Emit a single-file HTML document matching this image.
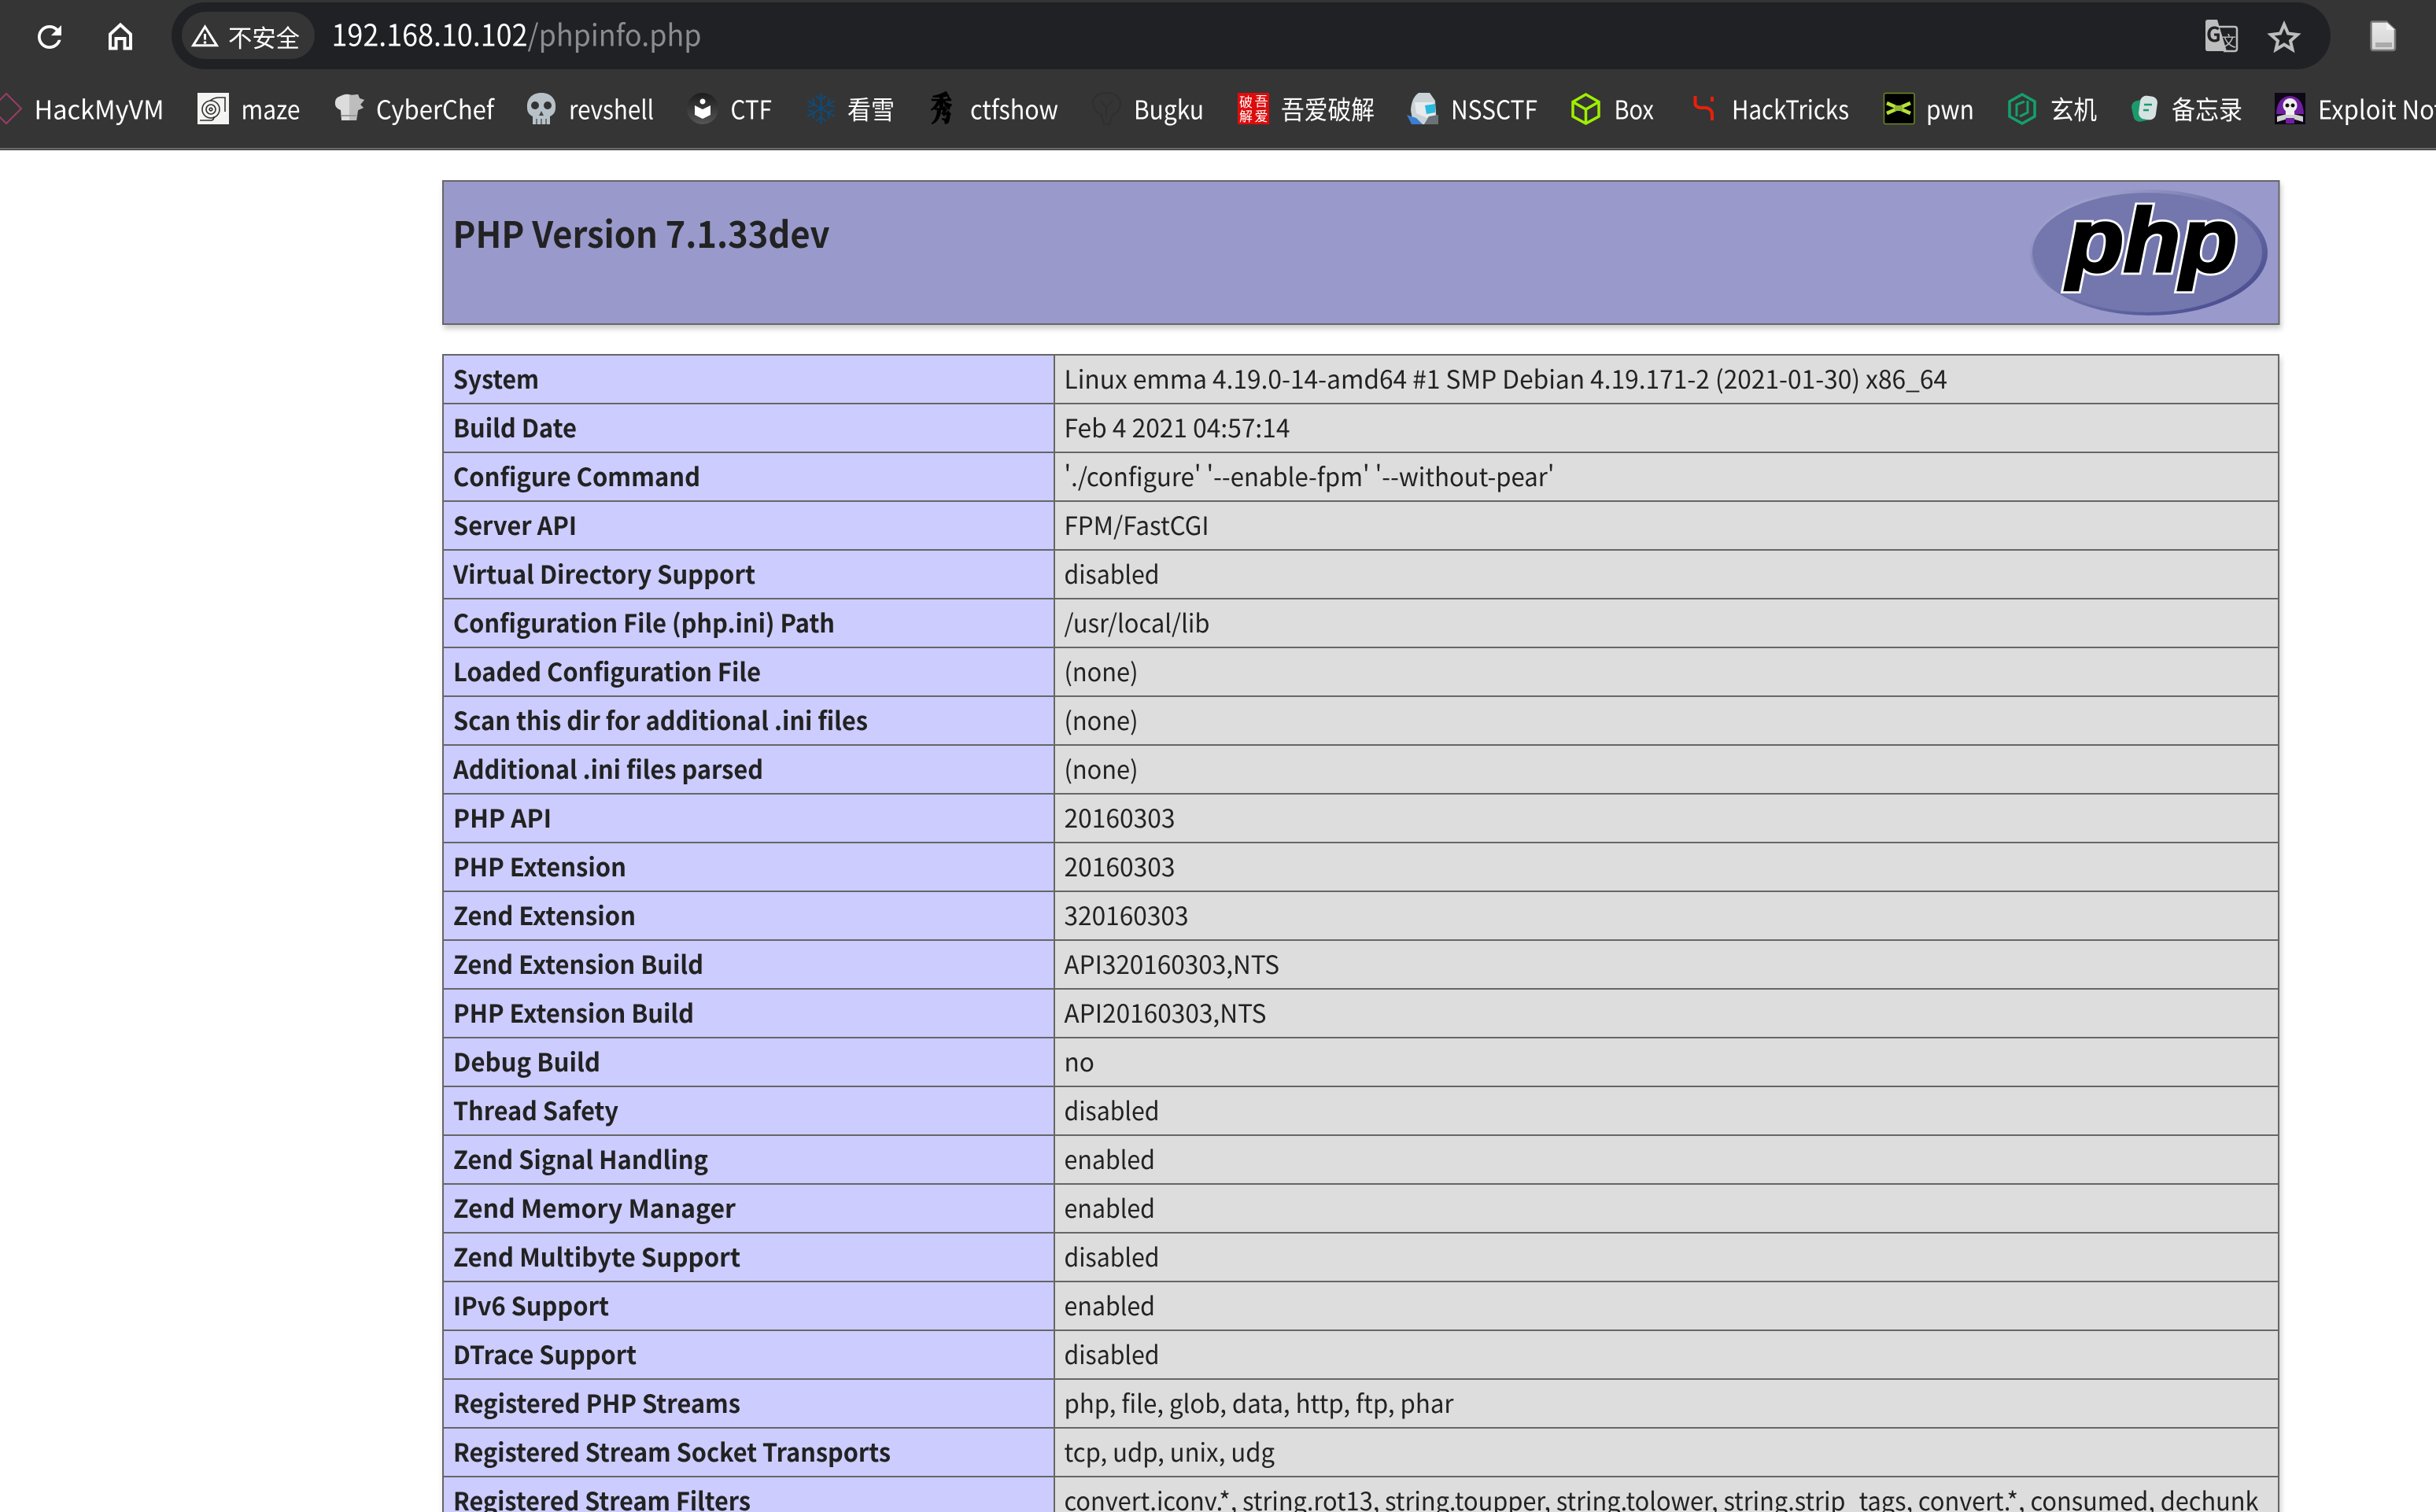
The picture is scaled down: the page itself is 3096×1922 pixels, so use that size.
<!DOCTYPE html>
<html lang="zh"><head><meta charset="utf-8"><title>phpinfo()</title>
<style>
html,body{margin:0;padding:0;width:3096px;height:1922px;overflow:hidden;background:#fff}
svg{display:block;position:absolute;left:0;top:0}
text{font-family:"Noto Sans CJK SC","Liberation Sans",sans-serif}
.b text{fill:#fff;font-size:33px}
.l text{fill:#222;font-size:32px;font-weight:700}
.v text{fill:#222;font-size:32px}
</style></head><body>
<svg width="3096" height="1922" viewBox="0 0 3096 1922" xmlns="http://www.w3.org/2000/svg">
<defs>
<linearGradient id="rim" x1="0" y1="0" x2="1" y2="1"><stop offset="0" stop-color="#b4b6d8"/><stop offset=".45" stop-color="#7377ad"/><stop offset="1" stop-color="#3f4389"/></linearGradient>
<linearGradient id="ctf" x1="0" y1="0" x2="0" y2="1"><stop offset="0" stop-color="#1c1c1c"/><stop offset="1" stop-color="#555"/></linearGradient>
<linearGradient id="doc" x1="0" y1="0" x2="0" y2="1"><stop offset="0" stop-color="#e8e8e8"/><stop offset="1" stop-color="#d4d4d4"/></linearGradient>
</defs>
<!-- browser chrome -->
<rect width="3096" height="188" fill="#353535"/>
<rect y="188" width="3096" height="2" fill="#6a6a6a"/>
<rect y="190" width="3096" height="1" fill="#333"/>
<rect x="218" y="3" width="2744" height="85" rx="42.5" fill="#202124"/>
<rect x="231" y="15" width="169" height="60" rx="30" fill="#353535"/>
<path transform="translate(40.5 24.5) scale(1.875)" fill="#fff" d="M17.65 6.35A7.958 7.958 0 0 0 12 4c-4.42 0-7.99 3.58-7.99 8s3.57 8 7.99 8c3.73 0 6.84-2.55 7.73-6h-2.08A5.99 5.99 0 0 1 12 18c-3.31 0-6-2.69-6-6s2.69-6 6-6c1.66 0 3.14.69 4.22 1.78L13 11h7V4l-2.35 2.35z"/>
<path d="M153 31.5L140 43.5V61.5H147.5V49H158.500V61.5H166V43.5Z" fill="none" stroke="#fff" stroke-width="4"/>
<path d="M260.500 34L245.500 57.800H275.500Z" fill="none" stroke="#fff" stroke-width="3"/>
<path d="M260.500 43V50.500" stroke="#fff" stroke-width="3"/><circle cx="260.500" cy="54" r="1.800" fill="#fff"/>
<text x="290" y="60" font-size="31" fill="#fff" textLength="91" lengthAdjust="spacingAndGlyphs">不安全</text>
<text x="421.500" y="58.500" font-size="38" fill="#fff" textLength="249" lengthAdjust="spacingAndGlyphs">192.168.10.102</text>
<text x="670.500" y="58.500" font-size="38" fill="#8a8c8f" textLength="221" lengthAdjust="spacingAndGlyphs">/phpinfo.php</text>
<!-- translate -->
<path d="M2806 25H2818L2830 65H2806Q2803 65 2803 62V28Q2803 25 2806 25Z" fill="#bdbdbd"/>
<path d="M2820 34H2840Q2843 34 2843 37V62Q2843 65 2840 65H2826" fill="none" stroke="#bdbdbd" stroke-width="2.500"/>
<text x="2804" y="53" font-size="26" font-weight="700" fill="#202124">G</text>
<text x="2823" y="59" font-size="19" fill="#bdbdbd">文</text>
<!-- star -->
<path d="M2903 31L2908 42.500L2920 44L2911 52L2913.500 63L2903 56.500L2892.500 63L2895 52L2886 44L2898 42.500Z" fill="none" stroke="#bdbdbd" stroke-width="4" stroke-linejoin="miter"/>
<!-- doc -->
<path d="M3015 27.500H3033L3044 38V61Q3044 64 3041 64H3016Q3013.500 64 3013.500 61V30Q3013.500 27.500 3015 27.500Z" fill="url(#doc)" stroke="#777" stroke-width="2.500"/>
<path d="M3033 28V38H3044" fill="#f2f2f2"/>
<rect x="3019" y="54" width="21" height="6" fill="#aaa"/>
<!-- bookmarks -->
<g class="b">
<path d="M8 119L27 138L8 157L-11 138Z" fill="none" stroke="#9a3d65" stroke-width="2"/>
<text x="43.500" y="151.500" textLength="165" lengthAdjust="spacingAndGlyphs">HackMyVM</text>
<rect x="251" y="118" width="40" height="40" fill="#f4f4f2"/>
<g fill="none" stroke="#333" stroke-width="1.600"><circle cx="268" cy="139" r="11"/><circle cx="268" cy="139" r="6"/><circle cx="268" cy="139" r="1.800"/><path d="M267 128Q272 124 278 124H286V142M254 153H268Q272 153 272 148V150"/></g>
<text x="306.500" y="151.500" textLength="75" lengthAdjust="spacingAndGlyphs">maze</text>
<path d="M433 122Q440 118 447 121L455 120L457 125L463 127L458 133L462 137L455 140L453 153H434L433 140Q425 137 426 130Q426 124 433 122Z" fill="#dcdcdc"/>
<path d="M444 121L455 120L457 125L463 127L458 133L462 137L455 140L453 153H444Z" fill="#bdbdbd"/>
<rect x="434" y="146" width="19" height="2" fill="#999"/>
<text x="478" y="151.500" textLength="150" lengthAdjust="spacingAndGlyphs">CyberChef</text>
<path d="M688 118C700 118 707 126 706 137C706 143 703 146 699 148V158H677V148C673 146 670 143 670 137C669 126 676 118 688 118Z" fill="#b7c1c8"/>
<circle cx="680" cy="134" r="5" fill="#333"/><circle cx="696" cy="134" r="5" fill="#333"/><path d="M688 141L691 147H685Z" fill="#444"/>
<path d="M682 151V158M688 151V158M694 151V158" stroke="#555" stroke-width="1.500"/>
<text x="723" y="151.500" textLength="108" lengthAdjust="spacingAndGlyphs">revshell</text>
<circle cx="893" cy="138" r="20" fill="url(#ctf)"/>
<circle cx="893" cy="129" r="3.500" fill="#fff"/><path d="M883 134L893 139L903 134V146L893 151L883 146Z" fill="#fff"/>
<text x="928.500" y="151.500" textLength="52.500" lengthAdjust="spacingAndGlyphs">CTF</text>
<g stroke="#0f4a78" stroke-width="2" fill="none"><path d="M1043.500 118V158M1026 128L1061 148M1061 128L1026 148"/><path d="M1037 122L1043.500 127L1050 122M1037 154L1043.500 149L1050 154M1027 136L1035 133L1033 125M1060 136L1052 133L1054 125M1027 140L1035 143L1033 151M1060 140L1052 143L1054 151"/></g>
<text x="1077" y="151.500" textLength="60" lengthAdjust="spacingAndGlyphs">看雪</text>
<text x="1183" y="153" stroke="#000" stroke-width="1.500" style="font-family:'Noto Serif CJK SC','Noto Sans CJK SC',serif;font-size:42px;font-weight:900;fill:#000" textLength="27" lengthAdjust="spacingAndGlyphs">秀</text>
<text x="1233" y="151.500" textLength="112" lengthAdjust="spacingAndGlyphs">ctfshow</text>
<g fill="none" stroke="#2f2f2f" stroke-width="2"><path d="M1389 128Q1392 119 1406 118Q1422 119 1424 130Q1424 142 1414 146L1410 158H1403L1400 146Q1389 141 1389 128Z"/><path d="M1398 128L1406 136L1415 127M1406 136V150"/></g>
<text x="1441" y="151.500" textLength="89" lengthAdjust="spacingAndGlyphs">Bugku</text>
<rect x="1573" y="118" width="40" height="40" fill="#dd0c0c"/>
<text x="1594.500" y="135" style="font-size:17px" fill="#fff">吾</text><text x="1594.500" y="154" style="font-size:17px" fill="#fff">爱</text><text x="1575" y="136" style="font-size:17px" fill="#fff">破</text><text x="1575" y="154" style="font-size:17px" fill="#fff">解</text>
<text x="1628" y="151.500" textLength="119" lengthAdjust="spacingAndGlyphs">吾爱破解</text>
<path d="M1803 118H1817L1824 128L1826 158H1796L1793 140Q1794 124 1803 118Z" fill="#c9d2d6"/>
<path d="M1798 130H1822L1824 146L1814 150L1800 144Z" fill="#e8eaec"/>
<path d="M1811 134L1824 132V143L1813 145Z" fill="#28b9df"/><path d="M1788 146L1800 150L1808 158H1794Z" fill="#3b7fd0"/><path d="M1816 148L1828 146V158H1810Z" fill="#6a7278"/>
<text x="1844" y="151.500" textLength="110" lengthAdjust="spacingAndGlyphs">NSSCTF</text>
<path d="M2015.500 120L2032 129.500V148L2015.500 157L1999 148V129.500ZM1999 129.500L2015.500 139L2032 129.500M2015.500 139V157" fill="none" stroke="#9fef00" stroke-width="3.500"/>
<text x="2051.500" y="151.500" textLength="50.500" lengthAdjust="spacingAndGlyphs">Box</text>
<path d="M2154.500 122V132Q2155 136 2161 137H2169Q2176 139 2176 146V153M2176 123V129" fill="none" stroke="#e8200c" stroke-width="4"/>
<text x="2201" y="151.500" textLength="149" lengthAdjust="spacingAndGlyphs">HackTricks</text>
<rect x="2394.500" y="118.500" width="38.500" height="39" rx="2" fill="#000" stroke="#6d8a22" stroke-width="1.500"/>
<path d="M2398 131L2428 144M2428 131L2398 144" stroke="#b4e23c" stroke-width="4.500" fill="none"/><rect x="2408" y="134" width="10" height="7" fill="#8fb82e"/>
<text x="2448" y="151.500" textLength="61" lengthAdjust="spacingAndGlyphs">pwn</text>
<path d="M2570 120L2586 129V148L2570 157L2554 148V129Z" fill="none" stroke="#14a06c" stroke-width="3.500"/>
<path d="M2563 148V133L2573 129M2577 128V143L2567 148" fill="none" stroke="#14a06c" stroke-width="3"/>
<text x="2606" y="151.500" textLength="59" lengthAdjust="spacingAndGlyphs">玄机</text>
<rect x="2710" y="127" width="24" height="27" rx="8" transform="rotate(-12 2722 140)" fill="#1d9a6c"/>
<rect x="2719" y="122" width="22" height="30" rx="8" transform="rotate(8 2730 137)" fill="#d6e2e2"/>
<path d="M2725 133H2735M2724 140H2731" stroke="#1d9a6c" stroke-width="2.500"/>
<text x="2760" y="151.500" textLength="90" lengthAdjust="spacingAndGlyphs">备忘录</text>
<rect x="2891" y="118" width="39" height="40" fill="#0d0716"/>
<path d="M2893 145Q2894 123 2910.500 122Q2927 123 2928 145Z" fill="#6f1fa0"/>
<path d="M2894 155L2910.500 150L2927 155V148L2910.500 144L2894 148Z" fill="#cfcfcf"/><path d="M2905 150H2916V157H2905Z" fill="#6f1fa0"/>
<circle cx="2910.500" cy="134" r="9" fill="#eee"/><rect x="2905" y="140" width="11" height="6" fill="#eee"/><circle cx="2907" cy="134" r="2.500" fill="#111"/><circle cx="2914" cy="134" r="2.500" fill="#111"/>
<text x="2946" y="151.500" textLength="159" lengthAdjust="spacingAndGlyphs">Exploit Not</text>
</g>
<!-- php header -->
<rect x="563" y="230" width="2333.500" height="182" fill="#99c" stroke="#666" stroke-width="2" style="filter:drop-shadow(2.5px 5px 3.500px #ccc)"/>
<text x="575.500" y="315" font-size="46" font-weight="700" fill="#222" textLength="479" lengthAdjust="spacingAndGlyphs">PHP Version 7.1.33dev</text>
<ellipse cx="2731" cy="321" rx="151" ry="80" fill="url(#rim)"/>
<ellipse cx="2729" cy="321" rx="146" ry="76" fill="#7377ad"/>
<text x="2627" y="345" font-size="114" font-style="italic" font-weight="700" fill="#fff" stroke="#fff" stroke-width="9" style="font-family:'Liberation Sans',sans-serif" textLength="216" lengthAdjust="spacingAndGlyphs">php</text>
<text x="2627" y="345" font-size="114" font-style="italic" font-weight="700" fill="#000" stroke="#000" stroke-width="3.500" style="font-family:'Liberation Sans',sans-serif" textLength="216" lengthAdjust="spacingAndGlyphs">php</text>
<!-- table -->
<g style="filter:drop-shadow(2.5px 5px 3.500px #ccc)">
<rect x="562" y="450" width="778" height="1480" fill="#ccf"/>
<rect x="1340" y="450" width="1557" height="1480" fill="#ddd"/>
</g>
<g fill="#666">
<rect x="562" y="450" width="2335" height="2"/><rect x="562" y="512" width="2335" height="2"/><rect x="562" y="574" width="2335" height="2"/><rect x="562" y="636" width="2335" height="2"/><rect x="562" y="698" width="2335" height="2"/><rect x="562" y="760" width="2335" height="2"/><rect x="562" y="822" width="2335" height="2"/><rect x="562" y="884" width="2335" height="2"/><rect x="562" y="946" width="2335" height="2"/><rect x="562" y="1008" width="2335" height="2"/><rect x="562" y="1070" width="2335" height="2"/><rect x="562" y="1132" width="2335" height="2"/><rect x="562" y="1194" width="2335" height="2"/><rect x="562" y="1256" width="2335" height="2"/><rect x="562" y="1318" width="2335" height="2"/><rect x="562" y="1380" width="2335" height="2"/><rect x="562" y="1442" width="2335" height="2"/><rect x="562" y="1504" width="2335" height="2"/><rect x="562" y="1566" width="2335" height="2"/><rect x="562" y="1628" width="2335" height="2"/><rect x="562" y="1690" width="2335" height="2"/><rect x="562" y="1752" width="2335" height="2"/><rect x="562" y="1814" width="2335" height="2"/><rect x="562" y="1876" width="2335" height="2"/>
<rect x="562" y="450" width="2" height="1480"/><rect x="1339" y="450" width="2" height="1480"/><rect x="2895" y="450" width="2" height="1480"/>
</g>
<g class="l">
<text x="576" y="494" textLength="109" lengthAdjust="spacingAndGlyphs">System</text>
<text x="576" y="556" textLength="157" lengthAdjust="spacingAndGlyphs">Build Date</text>
<text x="576" y="618" textLength="314" lengthAdjust="spacingAndGlyphs">Configure Command</text>
<text x="576" y="680" textLength="157" lengthAdjust="spacingAndGlyphs">Server API</text>
<text x="576" y="742" textLength="384" lengthAdjust="spacingAndGlyphs">Virtual Directory Support</text>
<text x="576" y="804" textLength="485" lengthAdjust="spacingAndGlyphs">Configuration File (php.ini) Path</text>
<text x="576" y="866" textLength="391" lengthAdjust="spacingAndGlyphs">Loaded Configuration File</text>
<text x="576" y="928" textLength="527" lengthAdjust="spacingAndGlyphs">Scan this dir for additional .ini files</text>
<text x="576" y="990" textLength="394" lengthAdjust="spacingAndGlyphs">Additional .ini files parsed</text>
<text x="576" y="1052" textLength="125" lengthAdjust="spacingAndGlyphs">PHP API</text>
<text x="576" y="1114" textLength="220" lengthAdjust="spacingAndGlyphs">PHP Extension</text>
<text x="576" y="1176" textLength="232" lengthAdjust="spacingAndGlyphs">Zend Extension</text>
<text x="576" y="1238" textLength="318" lengthAdjust="spacingAndGlyphs">Zend Extension Build</text>
<text x="576" y="1300" textLength="306" lengthAdjust="spacingAndGlyphs">PHP Extension Build</text>
<text x="576" y="1362" textLength="187" lengthAdjust="spacingAndGlyphs">Debug Build</text>
<text x="576" y="1424" textLength="210" lengthAdjust="spacingAndGlyphs">Thread Safety</text>
<text x="576" y="1486" textLength="324" lengthAdjust="spacingAndGlyphs">Zend Signal Handling</text>
<text x="576" y="1548" textLength="359" lengthAdjust="spacingAndGlyphs">Zend Memory Manager</text>
<text x="576" y="1610" textLength="365" lengthAdjust="spacingAndGlyphs">Zend Multibyte Support</text>
<text x="576" y="1672" textLength="198" lengthAdjust="spacingAndGlyphs">IPv6 Support</text>
<text x="576" y="1734" textLength="233" lengthAdjust="spacingAndGlyphs">DTrace Support</text>
<text x="576" y="1796" textLength="365" lengthAdjust="spacingAndGlyphs">Registered PHP Streams</text>
<text x="576" y="1858" textLength="556" lengthAdjust="spacingAndGlyphs">Registered Stream Socket Transports</text>
<text x="576" y="1920" textLength="378" lengthAdjust="spacingAndGlyphs">Registered Stream Filters</text>
</g>
<g class="v">
<text x="1352.500" y="494" textLength="1122.500" lengthAdjust="spacingAndGlyphs">Linux emma 4.19.0-14-amd64 #1 SMP Debian 4.19.171-2 (2021-01-30) x86_64</text>
<text x="1352.500" y="556" textLength="287" lengthAdjust="spacingAndGlyphs">Feb 4 2021 04:57:14</text>
<text x="1352.500" y="618" textLength="623" lengthAdjust="spacingAndGlyphs">'./configure' '--enable-fpm' '--without-pear'</text>
<text x="1352.500" y="680" textLength="184" lengthAdjust="spacingAndGlyphs">FPM/FastCGI</text>
<text x="1352.500" y="742" textLength="121" lengthAdjust="spacingAndGlyphs">disabled</text>
<text x="1352.500" y="804" textLength="185" lengthAdjust="spacingAndGlyphs">/usr/local/lib</text>
<text x="1352.500" y="866" textLength="94" lengthAdjust="spacingAndGlyphs">(none)</text>
<text x="1352.500" y="928" textLength="94" lengthAdjust="spacingAndGlyphs">(none)</text>
<text x="1352.500" y="990" textLength="94" lengthAdjust="spacingAndGlyphs">(none)</text>
<text x="1352.500" y="1052" textLength="141" lengthAdjust="spacingAndGlyphs">20160303</text>
<text x="1352.500" y="1114" textLength="141" lengthAdjust="spacingAndGlyphs">20160303</text>
<text x="1352.500" y="1176" textLength="158" lengthAdjust="spacingAndGlyphs">320160303</text>
<text x="1352.500" y="1238" textLength="273.500" lengthAdjust="spacingAndGlyphs">API320160303,NTS</text>
<text x="1352.500" y="1300" textLength="257" lengthAdjust="spacingAndGlyphs">API20160303,NTS</text>
<text x="1352.500" y="1362" textLength="38.500" lengthAdjust="spacingAndGlyphs">no</text>
<text x="1352.500" y="1424" textLength="121" lengthAdjust="spacingAndGlyphs">disabled</text>
<text x="1352.500" y="1486" textLength="115.500" lengthAdjust="spacingAndGlyphs">enabled</text>
<text x="1352.500" y="1548" textLength="115.500" lengthAdjust="spacingAndGlyphs">enabled</text>
<text x="1352.500" y="1610" textLength="121" lengthAdjust="spacingAndGlyphs">disabled</text>
<text x="1352.500" y="1672" textLength="115.500" lengthAdjust="spacingAndGlyphs">enabled</text>
<text x="1352.500" y="1734" textLength="121" lengthAdjust="spacingAndGlyphs">disabled</text>
<text x="1352.500" y="1796" textLength="495" lengthAdjust="spacingAndGlyphs">php, file, glob, data, http, ftp, phar</text>
<text x="1352.500" y="1858" textLength="267.500" lengthAdjust="spacingAndGlyphs">tcp, udp, unix, udg</text>
<text x="1352.500" y="1920" textLength="1518" lengthAdjust="spacingAndGlyphs">convert.iconv.*, string.rot13, string.toupper, string.tolower, string.strip_tags, convert.*, consumed, dechunk</text>
</g>
</svg>
</body></html>
